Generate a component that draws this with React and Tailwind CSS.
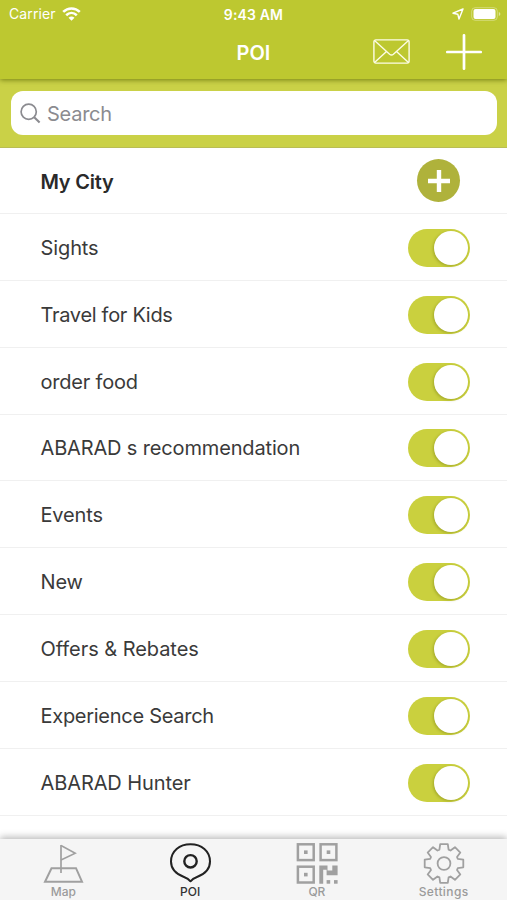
import React from 'react';

const categories = [
    { name: 'Sights', tracking: 'tracking-[-0.1px]' },
    { name: 'Travel for Kids', tracking: 'tracking-[-0.3px]' },
    { name: 'order food', tracking: 'tracking-[-0.2px]' },
    { name: 'ABARAD s recommendation', tracking: 'tracking-[-0.15px]' },
    { name: 'Events', tracking: 'tracking-[-0.15px]' },
    { name: 'New', tracking: 'tracking-[-0.15px]' },
    { name: 'Offers & Rebates', tracking: 'tracking-[-0.05px]' },
    { name: 'Experience Search', tracking: 'tracking-[-0.28px]' },
    { name: 'ABARAD Hunter', tracking: 'tracking-[-0.1px]' },
];

// Outline of an eight-toothed gear centred on 0,0
const gearPoints = Array.from({ length: 8 }, (_, i) => {
    const a = (i * Math.PI) / 4;
    return [[-4.6, -13.8], [-3.8, -19.3], [3.8, -19.3], [4.6, -13.8]]
        .map(([x, y]) => `${(x * Math.cos(a) - y * Math.sin(a)).toFixed(2)},${(x * Math.sin(a) + y * Math.cos(a)).toFixed(2)}`)
        .join(' ');
}).join(' ');

const MapIcon = () => (
    <svg width="42" height="42" viewBox="-1 -0.5 42 42" fill="none" stroke="#a0a0a0">
        <path d="M18 29.5V1.5" strokeWidth="1.7" />
        <path d="M18 2L32.3 9.8L18 16.5" strokeWidth="1.5" />
        <path d="M8.5 24.7H33L39 38.2H2Z" strokeWidth="2" />
    </svg>
);

const PoiIcon = () => (
    <svg width="42" height="42" viewBox="-0.5 0 42 42" fill="none" stroke="#222" strokeWidth="2" strokeLinejoin="round">
        <path d="M21 38.3C19.5 36.4 18 35.3 14.5 34C6.5 31 1.5 25.5 1.5 18.5C1.5 8 10 1.3 21 1.3S40.5 8 40.5 18.5C40.5 25.5 35.5 31 27.5 34C24 35.3 22.5 36.4 21 38.3Z" />
        <circle cx="21" cy="18.3" r="6.2" strokeWidth="2.4" />
    </svg>
);

const QrIcon = () => (
    <svg width="42" height="42" viewBox="0 0 42 42" fill="#a0a0a0">
        <g fill="none" stroke="#a0a0a0" strokeWidth="2.5">
            <rect x="1.9" y="1.3" width="15.8" height="15.8" />
            <rect x="24.6" y="1.3" width="15.8" height="15.8" />
            <rect x="1.9" y="23.7" width="15.8" height="15.8" />
        </g>
        <rect x="8" y="7.4" width="3.6" height="3.6" />
        <rect x="30.7" y="7.4" width="3.6" height="3.6" />
        <rect x="8" y="29.8" width="3.6" height="3.6" />
        <path d="M23.3 22.5H31.5V27.5H36.3V22.5H41.6V32.2H30.6V26.8H27.2V40.7H23.3Z" />
        <rect x="30.6" y="37.1" width="3.6" height="3.6" />
        <rect x="38" y="37.1" width="3.6" height="3.6" />
    </svg>
);

const SettingsIcon = () => (
    <svg width="42" height="42" viewBox="-21 -20.5 42 42" fill="none" stroke="#a0a0a0" strokeWidth="1.8" strokeLinejoin="round">
        <polygon points={gearPoints} />
        <circle r="6.4" />
    </svg>
);

const tabs = [
    { label: 'Map', icon: <MapIcon />, style: 'text-[#9b9b9b] text-[12px] font-medium tracking-[0.1px]' },
    { label: 'POI', icon: <PoiIcon />, style: 'text-[#333] text-[12px] font-medium' },
    { label: 'QR', icon: <QrIcon />, style: 'text-[#9b9b9b] text-[12px] font-medium' },
    { label: 'Settings', icon: <SettingsIcon />, style: 'text-[#9b9b9b] text-[12px] font-medium tracking-[0.4px]' },
];

const StatusBar = () => (
    <div className="grid h-[27px] grid-cols-3 items-center pl-[9px] pr-[6px] text-white">
        <div className="flex items-center gap-[6px] text-[14px]">
            <span className="tracking-[0.1px]">Carrier</span>
            <svg width="19" height="14" viewBox="0 0 19 14" fill="none" stroke="#fff" strokeWidth="2.6">
                <path d="M1.2 4.9C6 .3 13 .3 17.8 4.9" />
                <path d="M4.2 8.2C7.3 5.3 11.7 5.3 14.8 8.2" />
                <path d="M9.5 13.7L6.5 10.7Q9.5 8.3 12.5 10.7Z" fill="#fff" stroke="none" />
            </svg>
        </div>
        <div className="pt-[2px] pr-[3px] text-center text-[14px] font-semibold tracking-[0.15px]">9:43 AM</div>
        <div className="flex items-center justify-end gap-[7px]">
            <svg width="12" height="12" viewBox="0 0 12 12" fill="none" stroke="#fff" strokeWidth="1.4" strokeLinejoin="round">
                <path d="M11 1L1 5.2L5.8 6.2L7 11Z" />
            </svg>
            <svg width="30" height="14" viewBox="0 0 30 14">
                <rect x=".7" y=".7" width="25.6" height="12.6" rx="3.5" fill="none" stroke="#fff" strokeOpacity=".35" />
                <rect x="2.5" y="2.1" width="22" height="9.8" rx="2" fill="#fff" />
                <path d="M27.8 5V9Q29.4 8.4 29.4 7T27.8 5Z" fill="#fff" fillOpacity=".5" />
            </svg>
        </div>
    </div>
);

const NavBar = () => (
    <div className="grid h-[49px] grid-cols-3 items-center">
        <div />
        <h1 className="pt-[3px] text-center text-[20px] leading-none font-semibold text-white">POI</h1>
        <div className="flex items-center justify-end gap-[36px] pr-[25px]">
            <svg width="37" height="25" viewBox="0 0 37 25" fill="none" stroke="#fdfde6" strokeWidth="1.4">
                <rect x=".9" y=".9" width="35.2" height="23.2" rx="2" />
                <path d="M1.5 1.5L16.6 15.2Q18.5 16.7 20.4 15.2L35.5 1.5M1.5 23.5L13.5 12.4M35.5 23.5L23.5 12.4" />
            </svg>
            <svg width="36" height="36" viewBox="0 0 36 36" stroke="#fff" strokeWidth="2.7" strokeLinecap="round">
                <path d="M18 1.3V34.7M1.3 18H34.7" />
            </svg>
        </div>
    </div>
);

const Toggle = () => (
    <div className="flex h-[38px] w-[62px] items-center justify-end rounded-full bg-[#cad03e] pr-[2px]">
        <div className="size-[34px] rounded-full bg-white shadow-[-1px_1px_3px_rgba(90,95,0,0.35)]" />
    </div>
);

export default function App() {
    return (
        <div className="flex h-[900px] w-[507px] flex-col overflow-hidden bg-white font-['Inter',sans-serif]">
            <header className="relative h-[79px] shrink-0 bg-[#bdc830] shadow-[0_1px_5px_rgba(90,100,0,0.75)]">
                <StatusBar />
                <NavBar />
            </header>

            <div className="h-[69px] shrink-0 border-b border-[#b9bd55] bg-[#cad147] px-[10.5px] pt-[12px]">
                <div className="flex h-[44px] items-center gap-[6.5px] rounded-[12px] bg-white pl-[9px]">
                    <svg width="21" height="21" viewBox="0 0 21 21" fill="none" stroke="#8b8b90" strokeWidth="1.7">
                        <circle cx="8.7" cy="8.7" r="7.6" />
                        <path d="M14.2 14.2L19.6 19.6" strokeWidth="2.1" />
                    </svg>
                    <span className="pt-[2px] text-[20px] tracking-[-0.25px] text-[#8b8b90]">Search</span>
                </div>
            </div>

            <main className="min-h-0 flex-1 text-[20px] text-[#3a3a3a]">
                <div className="flex h-[66px] items-center justify-between border-b border-[#f0f0f0] pr-[47px] pl-[40.5px]">
                    <span className="pt-[2px] font-semibold tracking-[-0.25px] text-[#2a2a2a]">My City</span>
                    <div className="flex size-[43px] items-center justify-center rounded-full bg-[#afb23b]">
                        <svg width="22" height="22" viewBox="0 0 22 22" stroke="#fff" strokeWidth="4.4">
                            <path d="M11 0V22M0 11H22" />
                        </svg>
                    </div>
                </div>
                {categories.map(({ name, tracking }) => (
                    <div key={name} className="flex h-[66.85px] items-center justify-between border-b border-[#f0f0f0] pt-[2px] pr-[37px] pl-[40.5px]">
                        <span className={tracking}>{name}</span>
                        <Toggle />
                    </div>
                ))}
            </main>

            <nav className="relative grid h-[61px] shrink-0 grid-cols-4 bg-[#f5f5f5] shadow-[0_-2px_7px_rgba(0,0,0,0.28)]">
                {tabs.map((tab) => (
                    <div key={tab.label} className="flex flex-col items-center pt-[4px]">
                        {tab.icon}
                        <span className={`leading-[13px] ${tab.style}`}>{tab.label}</span>
                    </div>
                ))}
            </nav>
        </div>
    );
}
